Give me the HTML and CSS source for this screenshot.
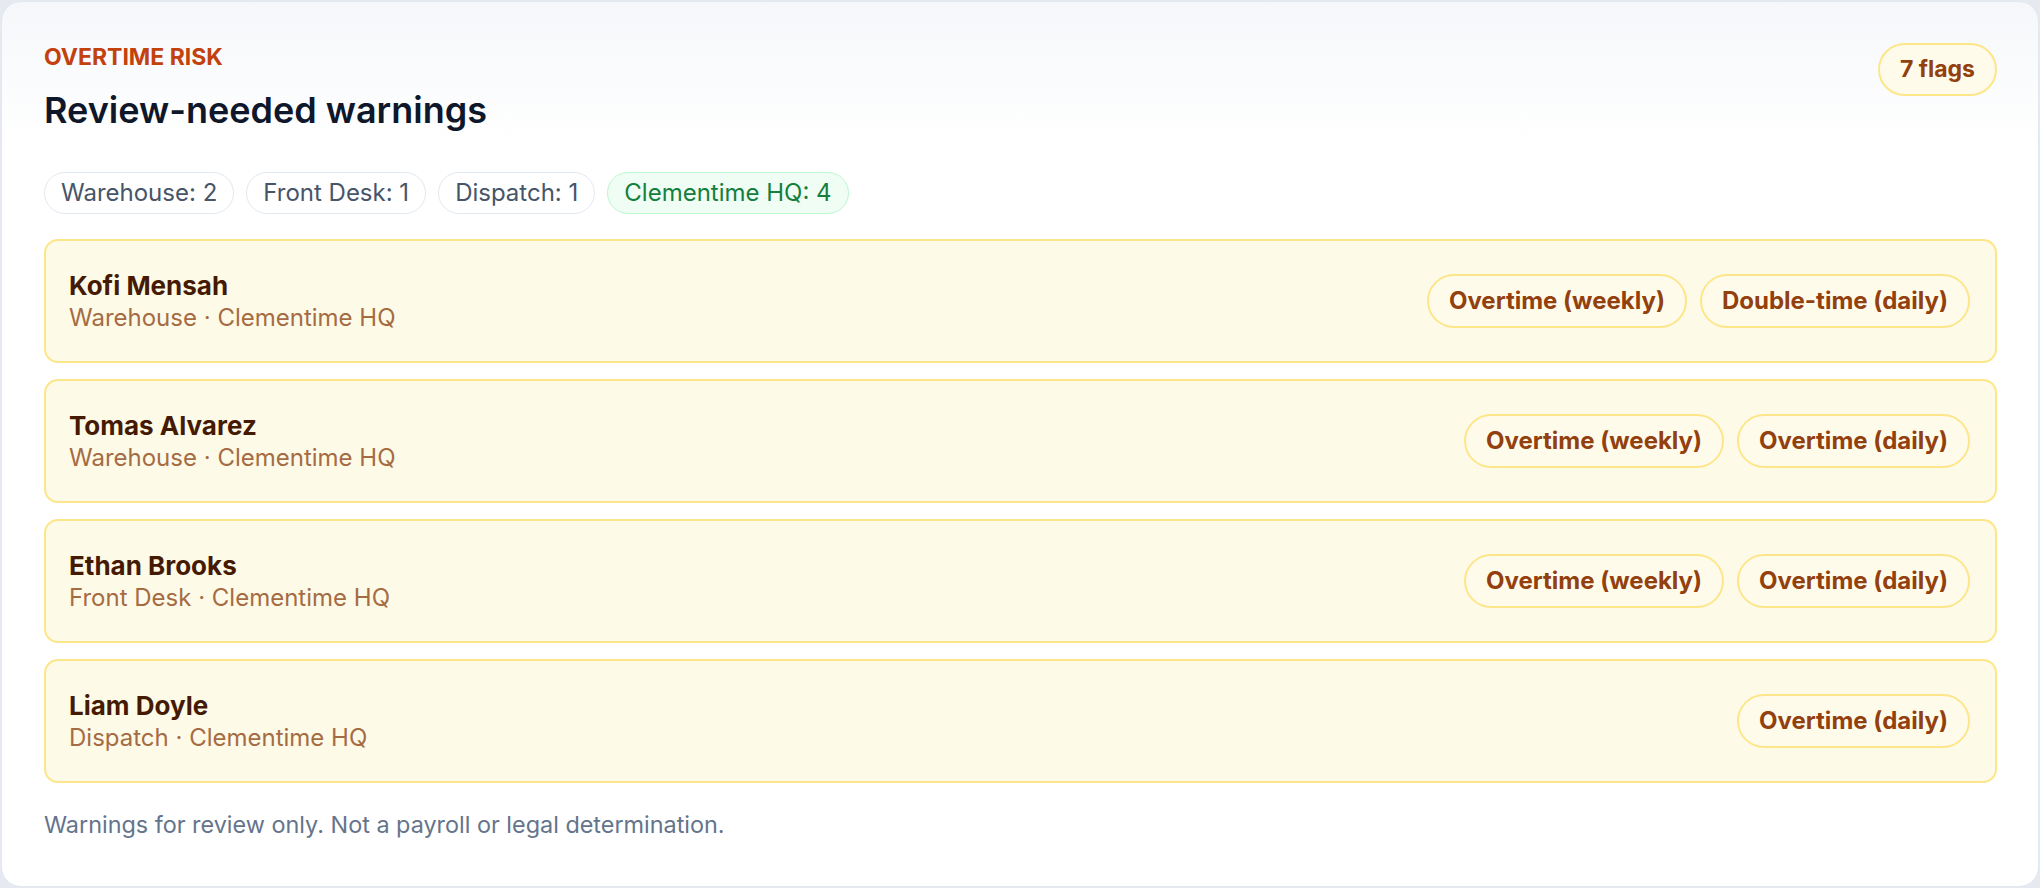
FILE: index.html
```html
<!DOCTYPE html>
<html lang="en">
<head>
  <meta charset="UTF-8">
  <title>Overtime Risk</title>
  <link rel="stylesheet" href="styles.css">
</head>
<body>
  <section class="panel">
    <header class="panel-head">
      <div>
        <p class="eyebrow">Overtime risk</p>
        <h2 class="title">Review-needed warnings</h2>
      </div>
      <span class="count">7 flags</span>
    </header>

    <div class="chips">
      <span class="chip">Warehouse: 2</span>
      <span class="chip">Front Desk: 1</span>
      <span class="chip">Dispatch: 1</span>
      <span class="chip chip-site">Clementime HQ: 4</span>
    </div>

    <ul class="rows">
      <li class="row">
        <div class="who">
          <div class="name">Kofi Mensah</div>
          <div class="meta">Warehouse · Clementime HQ</div>
        </div>
        <div class="flags">
          <span class="flag">Overtime (weekly)</span>
          <span class="flag">Double-time (daily)</span>
        </div>
      </li>
      <li class="row">
        <div class="who">
          <div class="name">Tomas Alvarez</div>
          <div class="meta">Warehouse · Clementime HQ</div>
        </div>
        <div class="flags">
          <span class="flag">Overtime (weekly)</span>
          <span class="flag">Overtime (daily)</span>
        </div>
      </li>
      <li class="row">
        <div class="who">
          <div class="name">Ethan Brooks</div>
          <div class="meta">Front Desk · Clementime HQ</div>
        </div>
        <div class="flags">
          <span class="flag">Overtime (weekly)</span>
          <span class="flag">Overtime (daily)</span>
        </div>
      </li>
      <li class="row">
        <div class="who">
          <div class="name">Liam Doyle</div>
          <div class="meta">Dispatch · Clementime HQ</div>
        </div>
        <div class="flags">
          <span class="flag">Overtime (daily)</span>
        </div>
      </li>
    </ul>

    <p class="note">Warnings for review only. Not a payroll or legal determination.</p>
  </section>
</body>
</html>
```

FILE: styles.css
```css
* {
  box-sizing: border-box;
}
html, body {
  height: 100%;
}
body {
  margin: 0;
  padding: 1px;
  background: #e6eaf0;
  font-family: Inter, "Noto Sans", sans-serif;
}
.panel {
  height: 100%;
  padding: 40px 41px 40px 42px;
  background: linear-gradient(180deg, #f5f7fa 0, #ffffff 140px);
  border: 1px solid #e2e8f0;
  border-radius: 20px;
}
.panel-head {
  display: flex;
  justify-content: space-between;
  align-items: flex-start;
}
.eyebrow {
  margin: 0;
  font-size: 23px;
  line-height: 30px;
  font-weight: 700;
  text-transform: uppercase;
  color: #c2410c;
}
.title {
  margin: 15px 0 0;
  font-size: 36px;
  line-height: 46px;
  font-weight: 600;
  color: #0f172a;
}
.count {
  margin-top: 1px;
  padding: 0 20px;
  height: 53px;
  line-height: 49px;
  font-size: 23px;
  font-weight: 700;
  color: #92400e;
  background: #fffbeb;
  border: 2px solid #fde68a;
  border-radius: 999px;
}
.chips {
  display: flex;
  gap: 12px;
  margin-top: 39px;
}
.chip {
  height: 42px;
  line-height: 40px;
  padding: 0 16px;
  font-size: 24px;
  color: #475569;
  background: #fff;
  border: 1px solid #e2e8f0;
  border-radius: 999px;
}
.chip-site {
  color: #15803d;
  background: #f0fdf4;
  border-color: #bbf7d0;
}
.rows {
  list-style: none;
  margin: 25px 0 0;
  padding: 0;
  display: flex;
  flex-direction: column;
  gap: 16px;
}
.row {
  display: flex;
  justify-content: space-between;
  align-items: center;
  height: 124px;
  padding: 0 25px 0 23px;
  background: #fefae8;
  border: 2px solid #fde68a;
  border-radius: 14px;
}
.name {
  font-size: 26px;
  line-height: 34px;
  font-weight: 700;
  color: #451a03;
}
.meta {
  font-size: 24px;
  line-height: 30px;
  color: #a56c43;
}
.flags {
  display: flex;
  gap: 13px;
}
.flag {
  height: 54px;
  line-height: 50px;
  padding: 0 20px;
  font-size: 24px;
  font-weight: 700;
  color: #92400e;
  background: #fffbeb;
  border: 2px solid #fde68a;
  border-radius: 999px;
}
.note {
  margin: 26px 0 0;
  font-size: 23.4px;
  line-height: 32px;
  color: #64748b;
}
```
